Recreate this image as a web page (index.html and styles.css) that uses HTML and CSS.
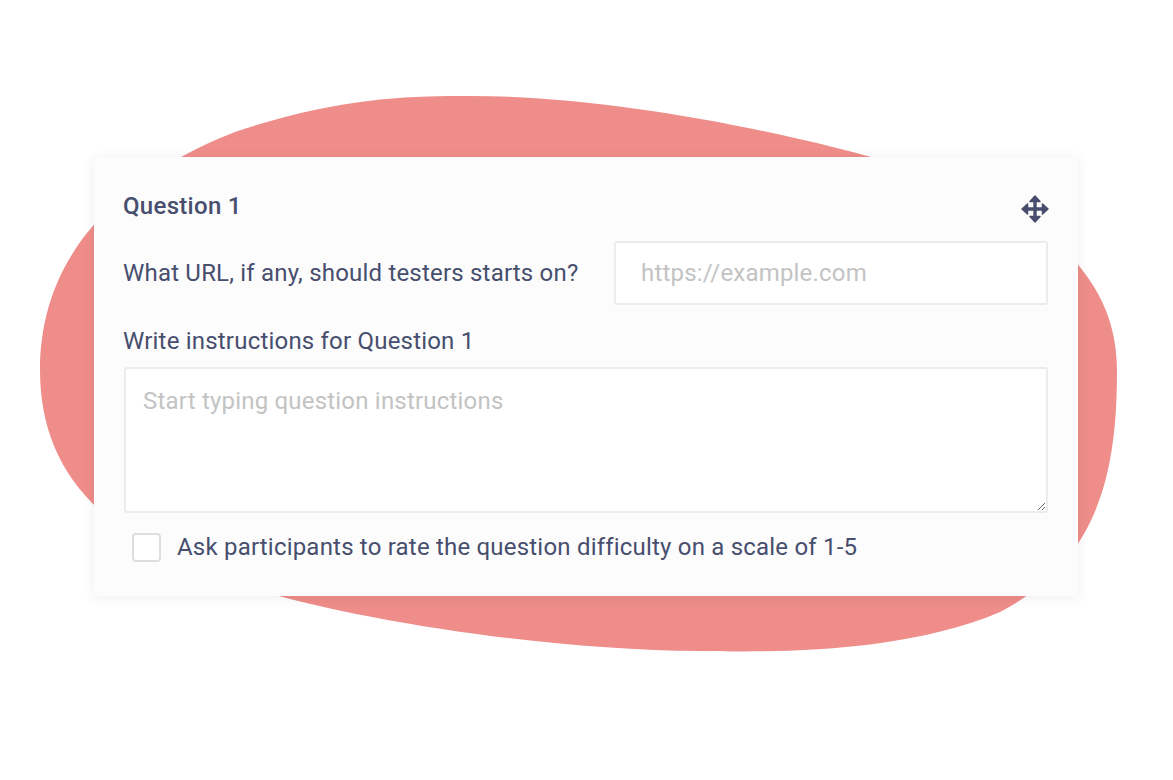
FILE: index.html
```html
<!DOCTYPE html>
<html lang="en">
<head>
<meta charset="utf-8">
<title>Question 1</title>
<link rel="stylesheet" href="styles.css">
</head>
<body>
<div class="stage">
  <svg class="blob" width="1173" height="780" viewBox="0 0 1173 780" aria-hidden="true">
    <path d="M 460 96 C 600 94 780 130 900 165 C 1050 210 1117 280 1117 370 C 1117 470 1100 560 1000 612 C 900 655 760 652 700 651 C 550 650 360 622 240 585 C 100 540 40 470 40 370 C 40 250 125 175 235 132 C 330 100 400 96 460 96 Z" fill="#ef8d8a"/>
  </svg>
  <section class="card">
    <header class="card-head">
      <h2 class="card-title">Question 1</h2>
      <svg class="move-icon" width="28" height="28" viewBox="0 0 28 28" aria-hidden="true">
        <g fill="#474e6e" stroke="#474e6e" stroke-linejoin="round">
          <path d="M14 5 V23 M5 14 H23" stroke-width="3.4" fill="none"/>
          <path d="M14 1 L9 6.5 H19 Z" stroke-width="1.5"/>
          <path d="M14 27 L9 21.5 H19 Z" stroke-width="1.5"/>
          <path d="M1 14 L6.5 9 V19 Z" stroke-width="1.5"/>
          <path d="M27 14 L21.5 9 V19 Z" stroke-width="1.5"/>
        </g>
      </svg>
    </header>
    <div class="url-row">
      <label class="field-label" for="url">What URL, if any, should testers starts on?</label>
      <input class="url-input" id="url" type="text" placeholder="https://example.com">
    </div>
    <label class="field-label instr-label" for="instr">Write instructions for Question 1</label>
    <textarea class="instr-input" id="instr" placeholder="Start typing question instructions"></textarea>
    <div class="check-row">
      <input class="check" id="rate" type="checkbox">
      <label class="check-label" for="rate">Ask participants to rate the question difficulty on a scale of 1-5</label>
    </div>
  </section>
</div>
</body>
</html>
```

FILE: styles.css
```css
html, body {
  margin: 0;
  padding: 0;
  background: #ffffff;
}

body {
  font-family: Roboto, "Liberation Sans", sans-serif;
  color: #474e6e;
  letter-spacing: 0.2px;
}

.stage {
  position: relative;
  width: 1173px;
  height: 780px;
  padding: 157px 0 0 94px;
  box-sizing: border-box;
}

.blob {
  position: absolute;
  left: 0;
  top: 0;
}

.card {
  position: relative;
  width: 984px;
  box-sizing: border-box;
  background: #fcfcfc;
  border-radius: 3px;
  box-shadow: 0 2px 14px rgba(0, 0, 0, 0.07);
  padding: 33px 30px 34px 29px;
  display: flex;
  flex-direction: column;
}

.card-head {
  display: flex;
  align-items: center;
  justify-content: space-between;
  height: 32px;
}

.card-title {
  margin: 0;
  font-size: 24px;
  font-weight: 500;
  line-height: 28px;
  color: #474e6e;
  letter-spacing: 0.3px;
}

.move-icon {
  display: block;
  margin-right: -1px;
  margin-top: 5px;
}

.url-row {
  display: flex;
  align-items: center;
  justify-content: space-between;
  margin-top: 19px;
}

.field-label {
  font-size: 24px;
  line-height: 28px;
  color: #474e6e;
}

.url-input {
  width: 434px;
  height: 64px;
  box-sizing: border-box;
  border: 2px solid #ececec;
  border-radius: 3px;
  background: #ffffff;
  padding: 0 25px;
  font-family: inherit;
  font-size: 24px;
  letter-spacing: 0.2px;
  color: #474e6e;
  outline: none;
}

.instr-label {
  margin-top: 22px;
  display: block;
}

.instr-input {
  margin-top: 12px;
  height: 146px;
  box-sizing: border-box;
  border: 2px solid #ececec;
  border-radius: 3px;
  background: #ffffff;
  padding: 18px 17px;
  font-family: inherit;
  font-size: 24px;
  letter-spacing: 0.2px;
  line-height: 28px;
  color: #474e6e;
  outline: none;
  resize: vertical;
  margin-left: 1px;
}

.url-input::placeholder,
.instr-input::placeholder {
  color: #c3c3c3;
  opacity: 1;
}

.check-row {
  display: flex;
  align-items: center;
  gap: 16px;
  margin-top: 20px;
  padding-left: 9px;
}

.check {
  appearance: none;
  -webkit-appearance: none;
  margin: 0;
  width: 29px;
  height: 29px;
  box-sizing: border-box;
  border: 2px solid #dedede;
  border-radius: 4px;
  background: #ffffff;
}

.check-label {
  font-size: 24px;
  line-height: 26px;
  color: #474e6e;
  padding-bottom: 2px;
}
```
